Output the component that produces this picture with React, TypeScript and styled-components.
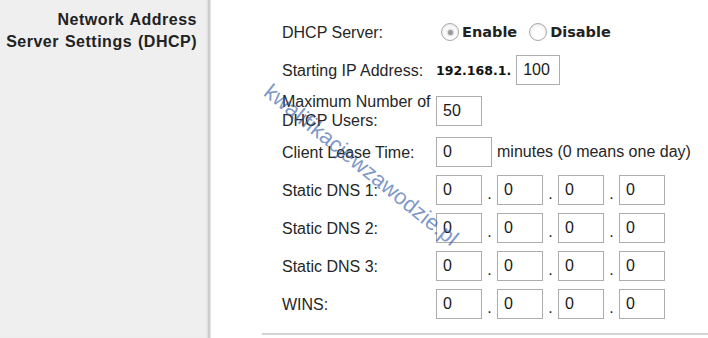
import styled, { createGlobalStyle } from "styled-components";

const GlobalStyle = createGlobalStyle`
    html, body {
        margin: 0;
        padding: 0;
        background: #fff;
    }
    body {
        font-family: "Liberation Sans", Arial, sans-serif;
    }
`;

const Page = styled.div`
    position: relative;
    display: flex;
    width: 708px;
    height: 338px;
    overflow: hidden;
    background: #fff;
`;

const Sidebar = styled.div`
    width: 208px;
    flex-shrink: 0;
    background: #efefef;
    border-right: 2px solid #cdcdcd;
    box-shadow: inset -2px 0 2px -1px rgba(0, 0, 0, 0.08), 1px 0 0 #e6e6e6;
`;

const SectionTitle = styled.h2`
    margin: 0;
    padding: 9px 11px 0 0;
    text-align: right;
    font-size: 16px;
    font-weight: bold;
    letter-spacing: 0.5px;
    word-spacing: 1px;
    line-height: 22px;
    color: #222;
`;

const Main = styled.div`
    flex: 1;
    display: flex;
    flex-direction: column;
    padding-top: 13px;
`;

const Form = styled.div`
    display: flex;
    flex-direction: column;
    padding-left: 72px;
`;

const Row = styled.div<{ $h?: number }>`
    display: flex;
    align-items: center;
    height: ${(p) => p.$h ?? 38}px;
`;

const Label = styled.div`
    width: 154px;
    flex-shrink: 0;
    font-size: 16px;
    line-height: 19px;
    color: #262626;
`;

const Field = styled.div`
    display: flex;
    align-items: center;
`;

const Box = styled.input<{ $w?: number }>`
    width: ${(p) => p.$w ?? 46}px;
    height: 30px;
    box-sizing: border-box;
    margin: 0;
    padding: 0 0 0 6px;
    border: 1px solid #adadad;
    background: #fff;
    font-family: "Liberation Sans", Arial, sans-serif;
    font-size: 16px;
    color: #1a1a1a;
    outline: none;
`;

const Dot = styled.span`
    align-self: flex-end;
    width: 15px;
    text-align: center;
    font-size: 16px;
    line-height: 22px;
    color: #262626;
`;

const Radio = styled.span<{ $checked?: boolean }>`
    position: relative;
    width: 18px;
    height: 18px;
    box-sizing: border-box;
    margin: 0 3px 0 5px;
    border: 1px solid #a8a8a8;
    border-radius: 50%;
    background: radial-gradient(circle at 50% 60%, #fff 40%, #e2e2e2 100%);

    &::after {
        content: "";
        display: ${(p) => (p.$checked ? "block" : "none")};
        position: absolute;
        left: 50%;
        top: 50%;
        width: 5px;
        height: 5px;
        margin: -2.5px 0 0 -2.5px;
        border-radius: 50%;
        background: #9a9a9a;
        box-shadow: 0 0 2px 1px #cfcfcf;
    }
`;

const RadioText = styled.span`
    margin-right: 7px;
    font-family: "DejaVu Sans", Verdana, sans-serif;
    font-size: 14.5px;
    font-weight: bold;
    color: #222;
`;

const IpPrefix = styled.span`
    margin-right: 5px;
    font-family: "DejaVu Sans", Verdana, sans-serif;
    font-size: 12.5px;
    font-weight: bold;
    color: #111;
`;

const Hint = styled.span`
    margin-left: 5px;
    font-size: 16px;
    color: #262626;
`;

const Divider = styled.div`
    height: 2px;
    margin: 10px 0 0 52px;
    background: #d3d3d3;
`;

const Watermark = styled.div`
    position: absolute;
    left: 267px;
    top: 76px;
    transform: rotate(39deg);
    transform-origin: 0 50%;
    white-space: nowrap;
    font-size: 22px;
    color: rgba(40, 80, 160, 0.6);
    pointer-events: none;
`;

function IpFields() {
    return (
        <Field>
            <Box readOnly value="0" />
            <Dot>.</Dot>
            <Box readOnly value="0" />
            <Dot>.</Dot>
            <Box readOnly value="0" />
            <Dot>.</Dot>
            <Box readOnly value="0" />
        </Field>
    );
}

const dnsRows = ["Static DNS 1:", "Static DNS 2:", "Static DNS 3:", "WINS:"];

export default function App() {
    return (
        <>
            <GlobalStyle />
            <Page>
                <Sidebar>
                    <SectionTitle>
                        Network Address
                        <br />
                        Server Settings (DHCP)
                    </SectionTitle>
                </Sidebar>
                <Main>
                    <Form>
                        <Row>
                            <Label>DHCP Server:</Label>
                            <Field>
                                <Radio $checked />
                                <RadioText>Enable</RadioText>
                                <Radio />
                                <RadioText>Disable</RadioText>
                            </Field>
                        </Row>
                        <Row>
                            <Label>Starting IP Address:</Label>
                            <Field>
                                <IpPrefix>192.168.1.</IpPrefix>
                                <Box $w={44} readOnly value="100" />
                            </Field>
                        </Row>
                        <Row $h={44}>
                            <Label>
                                Maximum Number of
                                <br />
                                DHCP Users:
                            </Label>
                            <Field>
                                <Box readOnly value="50" />
                            </Field>
                        </Row>
                        <Row>
                            <Label>Client Lease Time:</Label>
                            <Field>
                                <Box $w={56} readOnly value="0" />
                                <Hint>minutes (0 means one day)</Hint>
                            </Field>
                        </Row>
                        {dnsRows.map((label) => (
                            <Row key={label}>
                                <Label>{label}</Label>
                                <IpFields />
                            </Row>
                        ))}
                    </Form>
                    <Divider />
                </Main>
                <Watermark>kwalifikacjewzawodzie.pl</Watermark>
            </Page>
        </>
    );
}
